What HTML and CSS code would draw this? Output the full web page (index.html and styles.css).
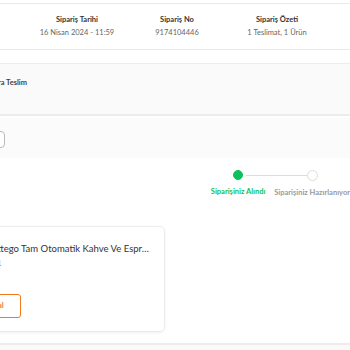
FILE: index.html
```html
<!DOCTYPE html>
<html lang="tr">
  <head>
    <meta charset="UTF-8" />
    <meta name="viewport" content="width=device-width, initial-scale=1.0" />
    <title>Sipariş Detayı</title>
    <link rel="stylesheet" href="styles.css">
  </head>
  <body>
    <div class="summary">
      <div class="cell">
        <div class="cell-title">Sipariş Tarihi</div>
        <div class="cell-value">16 Nisan 2024 - 11:59</div>
      </div>
      <div class="cell">
        <div class="cell-title">Sipariş No</div>
        <div class="cell-value">9174104446</div>
      </div>
      <div class="cell">
        <div class="cell-title">Sipariş Özeti</div>
        <div class="cell-value">1 Teslimat, 1 Ürün</div>
      </div>
    </div>

    <div class="delivery">
      <div class="delivery-label">
        <span>Kargoya Verildikten Sonra Teslim</span>
      </div>
    </div>

    <div class="toolbar">
      <div class="toolbar-btn"></div>
    </div>

    <div class="steps">
      <div class="step done">
        <div class="step-dot"></div>
        <div class="step-label">Siparişiniz Alındı</div>
      </div>
      <div class="step">
        <div class="step-dot"></div>
        <div class="step-label">Siparişiniz Hazırlanıyor</div>
      </div>
    </div>

    <div class="product-card">
      <div class="product-name">Philips Lattego Tam Otomatik Kahve Ve Espresso Makinesi</div>
      <div class="product-qty">Adet: 1</div>
      <div class="product-action">Siparişi İptal</div>
    </div>

    <div class="next-box"></div>
  </body>
</html>
```

FILE: styles.css
```css
*{
    margin: 0;
    padding: 0;
    box-sizing: border-box;
}

body{
    width: 350px;
    height: 350px;
    overflow: hidden;
    background-color: #fff;
    font-family: 'Lato', 'Open Sans', sans-serif;
    color: #333;
}

.summary{
    display: flex;
    margin-top: 3px;
    padding-left: 27px;
    height: 47px;
    border-top: 1px solid #e9e9e9;
    border-bottom: 1px solid #e9e9e9;
    align-items: center;
}

.cell{
    width: 100px;
    text-align: center;
}

.cell-title{
    font-size: 7.5px;
    font-weight: 700;
    color: #333;
    line-height: 12px;
}

.cell-value{
    font-size: 7.5px;
    color: #666;
    line-height: 13px;
}

.delivery{
    margin-top: 13px;
    height: 53px;
    background-color: #fafafa;
    border-top: 1px solid #ececec;
    border-bottom: 2px solid #ececec;
    padding-top: 14px;
}

/* label is wider than the visible strip, overflow goes off the left edge */
.delivery-label{
    width: 27px;
    display: flex;
    justify-content: flex-end;
    white-space: nowrap;
    font-size: 7.5px;
    font-weight: 700;
    color: #444;
}

.toolbar{
    margin-top: 2px;
    height: 40px;
    background-color: #fbfbfb;
    padding-top: 13px;
}

.toolbar-btn{
    margin-left: -20px;
    width: 25px;
    height: 17px;
    border: 1px solid #bbb;
    border-radius: 4px;
    background-color: #fff;
}

.steps{
    display: flex;
    margin-left: 202px;
    padding-top: 12px;
    height: 67px;
}

.step{
    position: relative;
    width: 78px;
    display: flex;
    flex-direction: column;
    align-items: center;
}

.step-dot{
    width: 11px;
    height: 11px;
    border-radius: 50%;
    border: 1.5px solid #ddd;
    background-color: #fff;
    z-index: 1;
}

.step.done .step-dot{
    width: 10px;
    height: 10px;
    border-color: #0bc15c;
    background-color: #0bc15c;
}

.step.done::after{
    content: "";
    position: absolute;
    top: 5px;
    left: 44px;
    width: 72px;
    height: 1px;
    background-color: #ddd;
}

.step-label{
    margin-top: 7px;
    font-size: 7.5px;
    font-weight: 700;
    color: #9a9a9a;
    white-space: nowrap;
}

.step.done .step-label{
    color: #0bc15c;
}

.product-card{
    margin-left: -60px;
    width: 225px;
    height: 106px;
    margin-top: 1px;
    border: 1px solid #ececec;
    border-radius: 5px;
    box-shadow: 0 1px 3px rgba(0, 0, 0, 0.06);
    padding: 15px 0 0 0;
}

.product-name{
    margin-left: 17px;
    width: 194px;
    font-size: 9.5px;
    color: #333;
    white-space: nowrap;
    overflow: hidden;
    text-overflow: ellipsis;
    line-height: 13px;
}

.product-qty{
    margin-left: 35px;
    font-size: 8px;
    color: #777;
    line-height: 12px;
    margin-top: 2px;
}

.product-action{
    margin-top: 25px;
    margin-left: 5px;
    display: inline-block;
    height: 24px;
    line-height: 22px;
    padding: 0 16px;
    border: 1px solid #f27a1a;
    border-radius: 3px;
    color: #f27a1a;
    font-size: 7.5px;
    font-weight: 700;
}

.next-box{
    margin-top: 11px;
    height: 20px;
    border-top: 2px solid #ececec;
    background-color: #fafafa;
}
```
